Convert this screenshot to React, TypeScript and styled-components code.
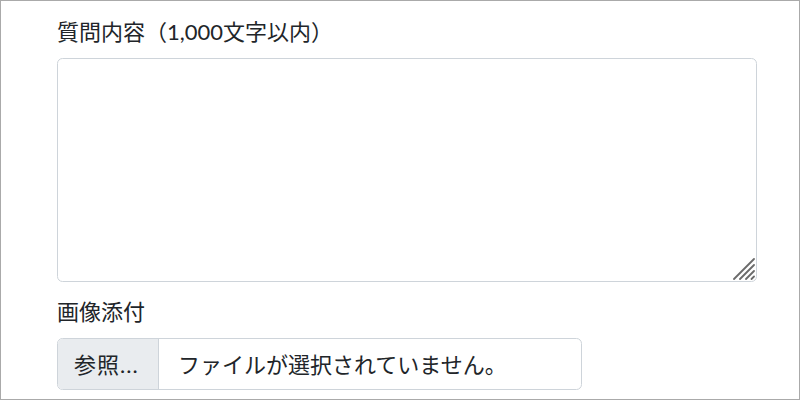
import React from "react";
import styled, { createGlobalStyle } from "styled-components";

const Global = createGlobalStyle`
  html, body { margin: 0; padding: 0; background: #fff; }
  body {
    font-family: Lato, "Noto Sans CJK JP", sans-serif;
    color: #212529;
  }
  * { box-sizing: border-box; }
`;

const Frame = styled.div`
  width: 800px;
  height: 400px;
  border: 1px solid #aaaaaa;
  padding: 14px 42px 0 56px;
  overflow: hidden;
  font-size: 22px;
  line-height: 33px;
`;

const Group = styled.div<{ $gap: number }>`
  display: flex;
  flex-direction: column;
  margin-bottom: ${(p) => p.$gap}px;
`;

const Label = styled.label<{ $mb: number }>`
  display: block;
  margin-bottom: ${(p) => p.$mb}px;
  font-size: 22px;
  line-height: 33px;
  color: #212529;
`;

const AreaWrap = styled.div`
  position: relative;
  width: 700px;
  height: 224px;
`;

const TextArea = styled.textarea`
  display: block;
  width: 100%;
  height: 100%;
  border: 1px solid #ced4da;
  border-radius: 5.5px;
  padding: 8px 16px;
  font: inherit;
  resize: none;
  outline: none;
  background: #fff;
`;

const Grip = styled.svg`
  position: absolute;
  right: 2px;
  bottom: 2px;
  width: 22px;
  height: 22px;
  pointer-events: none;
`;

const InputGroup = styled.div`
  display: flex;
  width: 525px;
  height: 52px;
  border: 1px solid #ced4da;
  border-radius: 5.5px;
  overflow: hidden;
`;

const BrowseButton = styled.span`
  display: flex;
  align-items: center;
  width: 101px;
  padding: 0 0 0 16px;
  background: #e9ecef;
  border-right: 1px solid #ced4da;
  color: #212529;
  white-space: nowrap;
  letter-spacing: 1px;
`;

const FileName = styled.span`
  display: flex;
  align-items: center;
  padding: 0 16px 0 19px;
  color: #212529;
  white-space: nowrap;
`;

export default function App() {
  return (
    <>
      <Global />
      <Frame>
        <Group $gap={13}>
          <Label $mb={10}>質問内容（1,000文字以内）</Label>
          <AreaWrap>
            <TextArea />
            <Grip viewBox="0 0 22 22">
              <g stroke="#6b6b6b" strokeWidth="1.8" strokeLinecap="round">
                <line x1="21" y1="1" x2="1" y2="21" />
                <line x1="21" y1="7" x2="7" y2="21" />
                <line x1="21" y1="13" x2="13" y2="21" />
                <line x1="21" y1="18.5" x2="18.5" y2="21" />
              </g>
            </Grip>
          </AreaWrap>
        </Group>
        <Group $gap={0}>
          <Label $mb={10}>画像添付</Label>
          <InputGroup>
            <BrowseButton>参照...</BrowseButton>
            <FileName>ファイルが選択されていません。</FileName>
          </InputGroup>
        </Group>
      </Frame>
    </>
  );
}
